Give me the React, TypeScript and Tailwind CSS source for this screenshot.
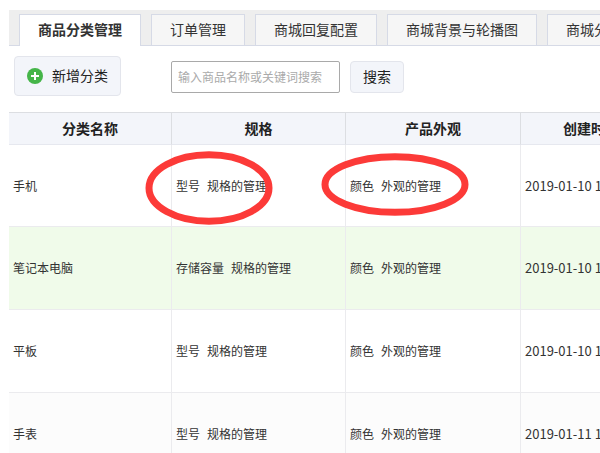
import { useState } from "react";

const tabs = [
  "商品分类管理",
  "订单管理",
  "商城回复配置",
  "商城背景与轮播图",
  "商城分类",
];

const categories = [
  { id: 1, name: "手机", spec: "型号", look: "颜色", created: "2019-01-10 1", marked: true, row: "h-[82px] bg-white" },
  { id: 2, name: "笔记本电脑", spec: "存储容量", look: "颜色", created: "2019-01-10 1", marked: false, row: "h-[83px] bg-[#f0fbea]" },
  { id: 3, name: "平板", spec: "型号", look: "颜色", created: "2019-01-10 1", marked: false, row: "h-[83px] bg-white" },
  { id: 4, name: "手表", spec: "型号", look: "颜色", created: "2019-01-11 1", marked: false, row: "h-[83px] bg-[#fcfcfc]" },
];

function PlusIcon() {
  return (
    <svg className="size-4" viewBox="0 0 16 16" aria-hidden="true">
      <circle cx="8" cy="8" r="8" fill="#45b549" />
      <path d="M8 4v8M4 8h8" stroke="#fff" strokeWidth="2" />
    </svg>
  );
}

export default function App() {
  const [activeTab, setActiveTab] = useState(tabs[0]);
  const [keyword, setKeyword] = useState("");

  return (
    <div className="h-screen overflow-hidden bg-white pt-[10px] pl-[9px] font-['Noto_Sans_CJK_SC',sans-serif] text-[#333]">
      <nav className="flex h-9 gap-[10px] overflow-hidden bg-[#eee] px-[10px] pt-1 shadow-[inset_0_-1px_0_#d6dae6]">
        {tabs.map((tab) => (
          <button
            key={tab}
            type="button"
            onClick={() => setActiveTab(tab)}
            className={
              tab === activeTab
                ? "shrink-0 border border-b-0 border-[#d6dae6] bg-white px-[18px] pb-1 text-sm font-bold whitespace-nowrap"
                : "shrink-0 border border-[#d6dae6] bg-[#f6f6f6] px-[18px] pb-0.5 text-sm whitespace-nowrap"
            }
          >
            {tab}
          </button>
        ))}
      </nav>

      <div className="flex items-center pt-[10px] pb-4 pl-[5px]">
        <button
          type="button"
          className="flex h-10 shrink-0 items-center gap-[9px] rounded border border-[#e3e5ec] bg-[#f3f5fa] px-3 text-sm text-[#222]"
        >
          <PlusIcon />
          <span className="pb-0.5">新增分类</span>
        </button>

        <form
          className="ml-[50px] flex items-center gap-[10px] pt-0.5"
          onSubmit={(event) => event.preventDefault()}
        >
          <input
            type="text"
            aria-label="输入商品名称或关键词搜索"
            placeholder="输入商品名称或关键词搜索"
            value={keyword}
            onChange={(event) => setKeyword(event.target.value)}
            className="h-8 w-[169px] rounded-xs border border-[#a9a9a9] px-[6px] pb-0.5 text-xs placeholder:text-[#aaa]"
          />
          <button
            type="submit"
            className="h-8 rounded border border-[#e3e5ec] bg-[#f3f5fa] px-3 pb-0.5 text-sm text-[#222]"
          >
            搜索
          </button>
        </form>
      </div>

      <div className="overflow-hidden">
        <table className="w-full min-w-[652px] table-fixed border-separate border-spacing-0 text-xs">
          <colgroup>
            <col className="w-[163px]" />
            <col className="w-[174px]" />
            <col className="w-[175px]" />
            <col />
          </colgroup>
          <thead>
            <tr className="h-[33px] bg-[#f3f5fa] text-sm text-[#222]">
              <th className="border-t border-r border-b border-[#dcdee2] border-b-[#e6e8ef] p-0 pb-0.5">分类名称</th>
              <th className="border-t border-r border-b border-[#dcdee2] border-b-[#e6e8ef] p-0 pb-0.5">规格</th>
              <th className="border-t border-r border-b border-[#dcdee2] border-b-[#e6e8ef] p-0 pb-0.5">产品外观</th>
              <th className="border-t border-b border-[#dcdee2] border-b-[#e6e8ef] p-0 pb-0.5">创建时间</th>
            </tr>
          </thead>
          <tbody>
            {categories.map((category) => (
              <tr key={category.id} className={category.row}>
                <td className="border-r border-b border-[#ebebee] px-1 py-0">{category.name}</td>
                <td className="relative border-r border-b border-[#ebebee] px-1 py-0">
                  <span className="mr-[7px]">{category.spec}</span>
                  <a href="#spec">规格的管理</a>
                  {category.marked && (
                    <svg
                      className="pointer-events-none absolute top-[6px] left-[-27px] h-[74px] w-[128px] max-w-none"
                      viewBox="0 0 128 74"
                      aria-hidden="true"
                    >
                      <ellipse cx="64" cy="37" rx="60" ry="33.2" fill="none" stroke="#fc3a38" strokeWidth="7" />
                    </svg>
                  )}
                </td>
                <td className="relative border-r border-b border-[#ebebee] px-1 py-0">
                  <span className="mr-[7px]">{category.look}</span>
                  <a href="#look">外观的管理</a>
                  {category.marked && (
                    <svg
                      className="pointer-events-none absolute top-2 left-[-25px] h-[64px] w-[148px] max-w-none"
                      viewBox="0 0 148 64"
                      aria-hidden="true"
                    >
                      <ellipse cx="74" cy="31.5" rx="70" ry="27.8" fill="none" stroke="#fc3a38" strokeWidth="7" />
                    </svg>
                  )}
                </td>
                <td className="border-b border-[#ebebee] px-1 py-0 text-[13px] whitespace-nowrap">
                  {category.created}
                </td>
              </tr>
            ))}
          </tbody>
        </table>
      </div>
    </div>
  );
}
